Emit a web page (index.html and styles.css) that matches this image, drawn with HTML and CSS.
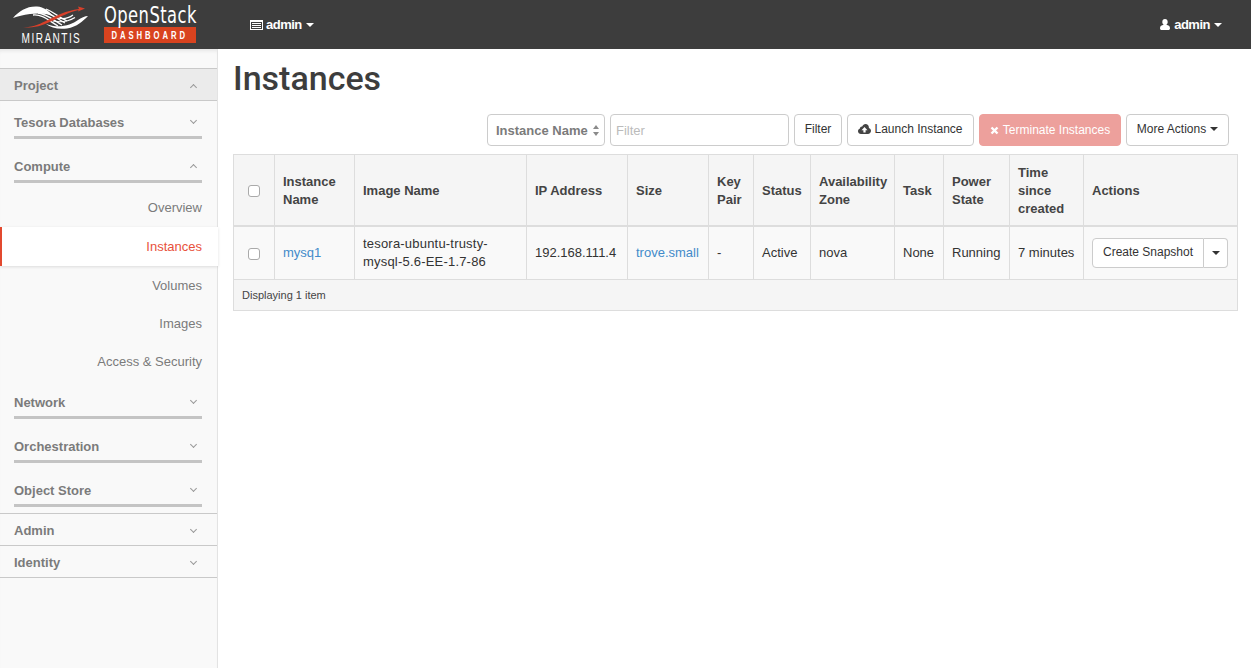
FILE: index.html
```html
<!DOCTYPE html>
<html lang="en">
<head>
<meta charset="utf-8">
<title>Instances - OpenStack Dashboard</title>
<link rel="stylesheet" href="styles.css">
</head>
<body>
<header class="topbar">
  <a class="brand">
    <span class="mirantis">
      <svg class="swoosh" width="76" height="24" viewBox="0 0 76 24">
        <path d="M0 13C6 6 14 1 24 1.500C31 2 36 6 40 11C33 8 24 8 17 9C10 10 5 11 0 13Z" fill="#fff"/>
        <path d="M20 10C30 9 36 16 45 21M25 8C34 9 40 15 49 20M29 6C37 8 43 13 52 18M33 4C40 7 46 12 54 16" fill="none" stroke="#fff" stroke-width="1.300"/>
        <path d="M33 19C46 24 58 20 65 15C68 13 72 11 75 11C70 16 64 22 54 23.500C45 24.500 38 23 33 19Z" fill="#fff"/>
        <path d="M40 16C49 18 56 16 62 12.500M45 13C51 14.500 56 13 60 10" fill="none" stroke="#fff" stroke-width="1.200"/>
        <path d="M10 22C30 23 38 8 66 4L65 1.500L72 3.500L65 6.500L65.500 5C44 10 32 25 10 22Z" fill="#d8402a"/>
      </svg>
      <span class="mirantis-name">MIRANTIS</span>
    </span>
    <span class="openstack">
      <span class="openstack-name">OpenStack</span>
      <span class="dashboard-tag"><span class="tag-text">DASHBOARD</span></span>
    </span>
  </a>
  <a class="nav-link project-switch">
    <svg class="nav-icon" width="13" height="10" viewBox="0 0 13 10"><path d="M0 0H13V10H0ZM1 2V9H12V2ZM2 3H11V4H2ZM2 5H11V6H2ZM2 7H11V8H2Z" fill="#fff" fill-rule="evenodd"/></svg>
    admin <i class="caret"></i>
  </a>
  <a class="nav-link user-menu">
    <svg class="nav-icon" width="10" height="11" viewBox="0 0 10 11"><path d="M5 0C6.700 0 7.700 1.300 7.700 3C7.700 4.300 7 5.400 6.300 5.800C8.500 6.200 10 7.200 10 9.200C10 10.300 9.300 11 8.300 11H1.700C.7 11 0 10.300 0 9.200C0 7.200 1.500 6.200 3.700 5.800C3 5.400 2.300 4.300 2.300 3C2.300 1.300 3.300 0 5 0Z" fill="#fff"/></svg>
    admin <i class="caret"></i>
  </a>
</header>
<div class="layout">
  <nav class="sidebar">
    <div class="dash-head first"><span>Project</span><i class="chev up"></i></div>
    <div class="group"><span>Tesora Databases</span><i class="chev"></i></div>
    <div class="group"><span>Compute</span><i class="chev up"></i></div>
    <div class="links">
      <a class="link">Overview</a>
      <a class="link active">Instances</a>
      <a class="link">Volumes</a>
      <a class="link">Images</a>
      <a class="link">Access &amp; Security</a>
    </div>
    <div class="group"><span>Network</span><i class="chev"></i></div>
    <div class="group"><span>Orchestration</span><i class="chev"></i></div>
    <div class="group"><span>Object Store</span><i class="chev"></i></div>
    <div class="dash-head"><span>Admin</span><i class="chev"></i></div>
    <div class="dash-head"><span>Identity</span><i class="chev"></i></div>
  </nav>
  <main class="content">
    <h1 class="title">Instances</h1>
    <div class="toolbar">
      <span class="select">Instance Name<svg class="updown" width="6" height="11" viewBox="0 0 6 11"><path d="M3 0L6 4H0ZM3 11L0 7H6Z" fill="#8a8a8a"/></svg></span>
      <span class="filter-input">Filter</span>
      <a class="btn w-filter">Filter</a>
      <a class="btn w-launch"><svg class="btn-icon" width="13" height="10" viewBox="0 0 13 10"><path d="M3 10C1.300 10 0 8.800 0 7.200C0 5.900 .8 4.900 1.900 4.500C2 3.200 3 2.300 4.200 2.500C4.900 1 6 0 7.500 0C9.500 0 10.900 1.500 10.900 3.500V3.900C12.100 4.400 13 5.400 13 6.800C13 8.600 11.600 10 9.900 10ZM6.500 3L3.500 6.200H5.400V8.500H7.600V6.200H9.500Z" fill="#444" fill-rule="evenodd"/></svg>Launch Instance</a>
      <a class="btn danger w-term"><svg class="btn-icon" width="9" height="9" viewBox="0 0 9 9"><path d="M1.500 1.500L7.500 7.500M7.500 1.500L1.500 7.500" stroke="#fff" stroke-width="2.400" fill="none"/></svg>Terminate Instances</a>
      <a class="btn w-more">More Actions <i class="caret dark"></i></a>
    </div>
    <table class="grid">
      <colgroup>
        <col class="c1"><col class="c2"><col class="c3"><col class="c4"><col class="c5"><col class="c6"><col class="c7"><col class="c8"><col class="c9"><col class="c10"><col class="c11"><col class="c12">
      </colgroup>
      <thead>
        <tr>
          <th class="center"><span class="check"></span></th>
          <th>Instance Name</th>
          <th>Image Name</th>
          <th>IP Address</th>
          <th>Size</th>
          <th>Key Pair</th>
          <th>Status</th>
          <th>Availability Zone</th>
          <th>Task</th>
          <th>Power State</th>
          <th>Time since created</th>
          <th>Actions</th>
        </tr>
      </thead>
      <tbody>
        <tr>
          <td class="center"><span class="check"></span></td>
          <td><a class="cell-link">mysq1</a></td>
          <td class="image-cell">tesora-ubuntu-trusty-mysql-5.6-EE-1.7-86</td>
          <td>192.168.111.4</td>
          <td><a class="cell-link">trove.small</a></td>
          <td>-</td>
          <td>Active</td>
          <td>nova</td>
          <td>None</td>
          <td>Running</td>
          <td>7 minutes</td>
          <td class="actions"><span class="split"><a class="btn join">Create Snapshot</a><a class="btn toggle"><i class="caret dark"></i></a></span></td>
        </tr>
      </tbody>
      <tfoot>
        <tr><td colspan="12">Displaying 1 item</td></tr>
      </tfoot>
    </table>
  </main>
</div>
</body>
</html>
```
FILE: styles.css
```css
* { box-sizing: border-box; }
html, body { margin: 0; height: 100%; }
body {
  font-family: "Liberation Sans", Arial, sans-serif;
  font-size: 13px;
  color: #333;
  background: #fff;
  overflow: hidden;
}
.topbar {
  height: 49px;
  background: #3d3d3d;
  display: flex;
  align-items: center;
  padding: 0 29px 0 13px;
  position: relative;
  z-index: 2;
}
.brand { display: flex; align-items: flex-start; width: 237px; height: 49px; }
.mirantis { display: flex; flex-direction: column; align-items: center; width: 76px; padding-top: 5px; }
.swoosh { display: block; }
.mirantis-name {
  display: block;
  font-size: 14px;
  line-height: 14px;
  letter-spacing: 2px;
  color: #fff;
  margin-top: 2px;
  white-space: nowrap;
  transform: scaleX(.72);
}
.openstack { display: flex; flex-direction: column; margin-left: 15px; width: 92px; padding-top: 3px; }
.openstack-name {
  display: block;
  font-family: "DejaVu Sans Condensed", "DejaVu Sans", sans-serif;
  font-size: 23px;
  line-height: 24px;
  color: #fff;
  letter-spacing: .55px;
  white-space: nowrap;
  transform: scaleX(.79);
  transform-origin: left center;
}
.dashboard-tag {
  display: flex;
  justify-content: center;
  background: #d9431f;
  color: #fff;
  height: 16px;
  overflow: hidden;
}
.tag-text {
  display: block;
  flex: none;
  font-size: 11px;
  font-weight: bold;
  letter-spacing: 4.2px;
  line-height: 16px;
  white-space: nowrap;
  transform: scaleX(.7);
}
.nav-link {
  color: #fff;
  font-size: 13px;
  font-weight: bold;
  letter-spacing: -.5px;
  display: flex;
  align-items: center;
  white-space: nowrap;
}
.nav-icon { margin-right: 3px; }
.user-menu .nav-icon { margin-right: 4px; }
.user-menu { margin-left: auto; }
.caret {
  display: inline-block;
  width: 0;
  height: 0;
  border-left: 4px solid transparent;
  border-right: 4px solid transparent;
  border-top: 4px solid #fff;
  margin-left: 4px;
}
.caret.dark { border-top-color: #333; }
.layout { display: flex; height: 619px; }
.sidebar {
  width: 218px;
  flex: none;
  background: #f9f9f9;
  border-right: 1px solid #e3e3e3;
  box-shadow: inset 0 4px 4px -3px #ddd;
  padding-top: 19px;
  position: relative;
}
.dash-head {
  display: flex;
  justify-content: space-between;
  align-items: center;
  height: 32px;
  padding: 2px 20px 0 14px;
  border-bottom: 1px solid #c9c9c9;
  font-size: 13px;
  font-weight: bold;
  color: #7b7b7b;
}
.dash-head.first {
  height: 33px;
  background: #ebebeb;
  border-top: 1px solid #c9c9c9;
}
.group + .dash-head { margin-top: 6px; border-top: 1px solid #c9c9c9; height: 33px; }
.group {
  display: flex;
  justify-content: space-between;
  align-items: center;
  height: 44px;
  margin: 0 15px 0 14px;
  padding: 13px 5px 0 0;
  border-bottom: 3px solid #c4c4c4;
  font-weight: bold;
  color: #7b7b7b;
}
.dash-head.first + .group { height: 38px; padding-top: 7px; }
.chev {
  display: block;
  width: 5px;
  height: 5px;
  border-right: 1px solid #999;
  border-bottom: 1px solid #999;
  transform: rotate(45deg);
  margin: -3px 1px 0 0;
}
.chev.up { transform: rotate(225deg); margin-top: 3px; }
.links { display: flex; flex-direction: column; padding-top: 5px; margin-bottom: -5px; }
.link {
  display: block;
  height: 38px;
  line-height: 40px;
  text-align: right;
  padding-right: 15px;
  color: #7b7b7b;
}
.link.active {
  height: 39px;
  line-height: 39px;
  margin: 1px -1px 0 0;
  padding-right: 16px;
  background: #fff;
  color: #e8513b;
  border-left: 2px solid #e2492f;
  box-shadow: 0 1px 3px rgba(0,0,0,.12);
  position: relative;
}
.content { flex: 1; padding: 0 13px 0 15px; min-width: 0; }
.title {
  font-family: Roboto, "Liberation Sans", sans-serif;
  font-size: 34px;
  font-weight: 500;
  line-height: 40px;
  color: #3d3d3d;
  margin: 9px 0 0;
}
.toolbar {
  display: flex;
  justify-content: flex-end;
  gap: 5px;
  height: 32px;
  margin: 16px 9px 8px 0;
}
.select {
  width: 118px;
  height: 32px;
  border: 1px solid #ccc;
  border-radius: 4px;
  padding: 1px 5px 0 8px;
  font-weight: bold;
  color: #7b7b7b;
  line-height: 30px;
  display: flex;
  align-items: center;
  justify-content: space-between;
}
.filter-input {
  width: 179px;
  height: 32px;
  border: 1px solid #ccc;
  border-radius: 4px;
  padding: 0 5px;
  color: #bbb;
  line-height: 31px;
}
.btn {
  display: inline-flex;
  align-items: center;
  justify-content: center;
  height: 32px;
  padding: 0 0 2px;
  border: 1px solid #ccc;
  border-radius: 4px;
  background: #fff;
  font-size: 12px;
  color: #333;
  white-space: nowrap;
}
.w-filter { width: 48px; }
.w-launch { width: 127px; }
.w-term { width: 142px; }
.w-more { width: 103px; }
.btn.danger {
  background: #eda09c;
  border-color: #eda09c;
  color: #fff;
  padding: 0;
}
.btn-icon { margin-right: 3px; }
.danger .btn-icon { margin-right: 4px; }
.grid {
  width: 1004px;
  table-layout: fixed;
  border-collapse: collapse;
  border: 1px solid #ddd;
  background: #f9f9f9;
}
.c1 { width: 41px; }
.c2 { width: 80px; }
.c3 { width: 172px; }
.c4 { width: 101px; }
.c5 { width: 81px; }
.c6 { width: 45px; }
.c7 { width: 57px; }
.c8 { width: 84px; }
.c9 { width: 49px; }
.c10 { width: 66px; }
.c11 { width: 74px; }
.c12 { width: 154px; }
.grid th, .grid td {
  border: 1px solid #ddd;
  padding: 8px;
  line-height: 18px;
  vertical-align: middle;
  text-align: left;
}
.grid thead th {
  background: #f5f5f5;
  font-weight: bold;
  border-bottom: 2px solid #ddd;
  height: 71px;
  padding-top: 9px;
  padding-bottom: 7px;
  color: #444;
}
.grid tbody td { height: 53px; }
.grid tbody .image-cell { letter-spacing: .2px; }
.grid tfoot td {
  background: #f5f5f5;
  font-size: 11px;
  height: 31px;
  padding: 4px 8px;
  color: #444;
}
.grid .center { text-align: center; padding: 0; }
.check {
  display: inline-block;
  width: 12px;
  height: 12px;
  border: 1px solid #aaa;
  border-radius: 3px;
  background: #fff;
  vertical-align: middle;
}
.cell-link { color: #428bca; }
.actions .split { display: flex; }
.btn.join {
  height: 30px;
  width: 112px;
  border-radius: 4px 0 0 4px;
}
.btn.toggle {
  height: 30px;
  width: 24px;
  border-left: 0;
  border-radius: 0 4px 4px 0;
  padding: 0;
}
.toggle .caret { margin-left: 0; }
```
